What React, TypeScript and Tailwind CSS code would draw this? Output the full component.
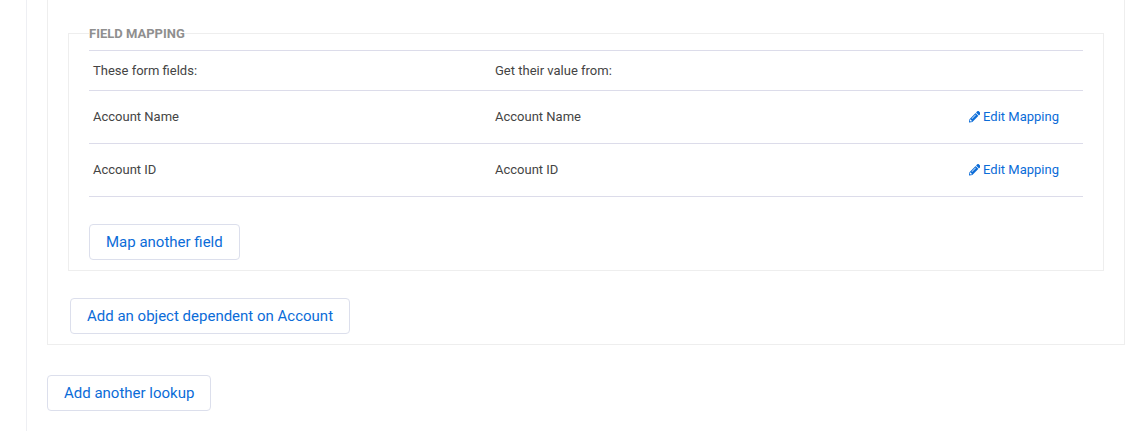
import * as React from 'react';
import { FaPencilAlt } from 'react-icons/fa';

const rows = ['Account Name', 'Account ID'];

const btn =
  'h-9 rounded-[4px] border border-[#dcdfec] bg-white px-4 text-[15px] leading-none text-[#0b6cd8]';

export default function App() {
  return (
    <div className="h-[431px] overflow-hidden bg-white font-['Roboto',sans-serif]">
      <div className="ml-[26px] h-full border-l border-[#eeeff3] pl-5 pr-[15px]">
        <div className="border-x border-b border-[#eeeeee] px-5 pb-[10px] pt-[26px]">
          <fieldset className="border border-[#eeeeee] px-5 pb-[10px]">
            <legend className="text-[13px] font-bold leading-[15px] text-[#8f8f8f]">FIELD MAPPING</legend>
            <div className="mt-[9px] border-t border-[#dcdcea]">
              <div className="flex h-10 items-center border-b border-[#dcdcea] text-[13px] text-[#444]">
                <div className="w-[406px] pl-1">These form fields:</div>
                <div>Get their value from:</div>
              </div>
              {rows.map((r) => (
                <div key={r} className="flex h-[53px] items-center border-b border-[#dcdcea] pr-6 text-[13px] text-[#444]">
                  <div className="w-[406px] pl-1">{r}</div>
                  <div className="flex-1">{r}</div>
                  <a className="flex items-center gap-[3px] text-[#0b6cd8]">
                    <FaPencilAlt className="text-[11.5px]" />
                    Edit Mapping
                  </a>
                </div>
              ))}
            </div>
            <button className={`${btn} mt-[27px]`}>Map another field</button>
          </fieldset>
          <button className={`${btn} ml-[2px] mt-[27px]`}>Add an object dependent on Account</button>
        </div>
        <button className={`${btn} mt-[30px]`}>Add another lookup</button>
      </div>
    </div>
  );
}
